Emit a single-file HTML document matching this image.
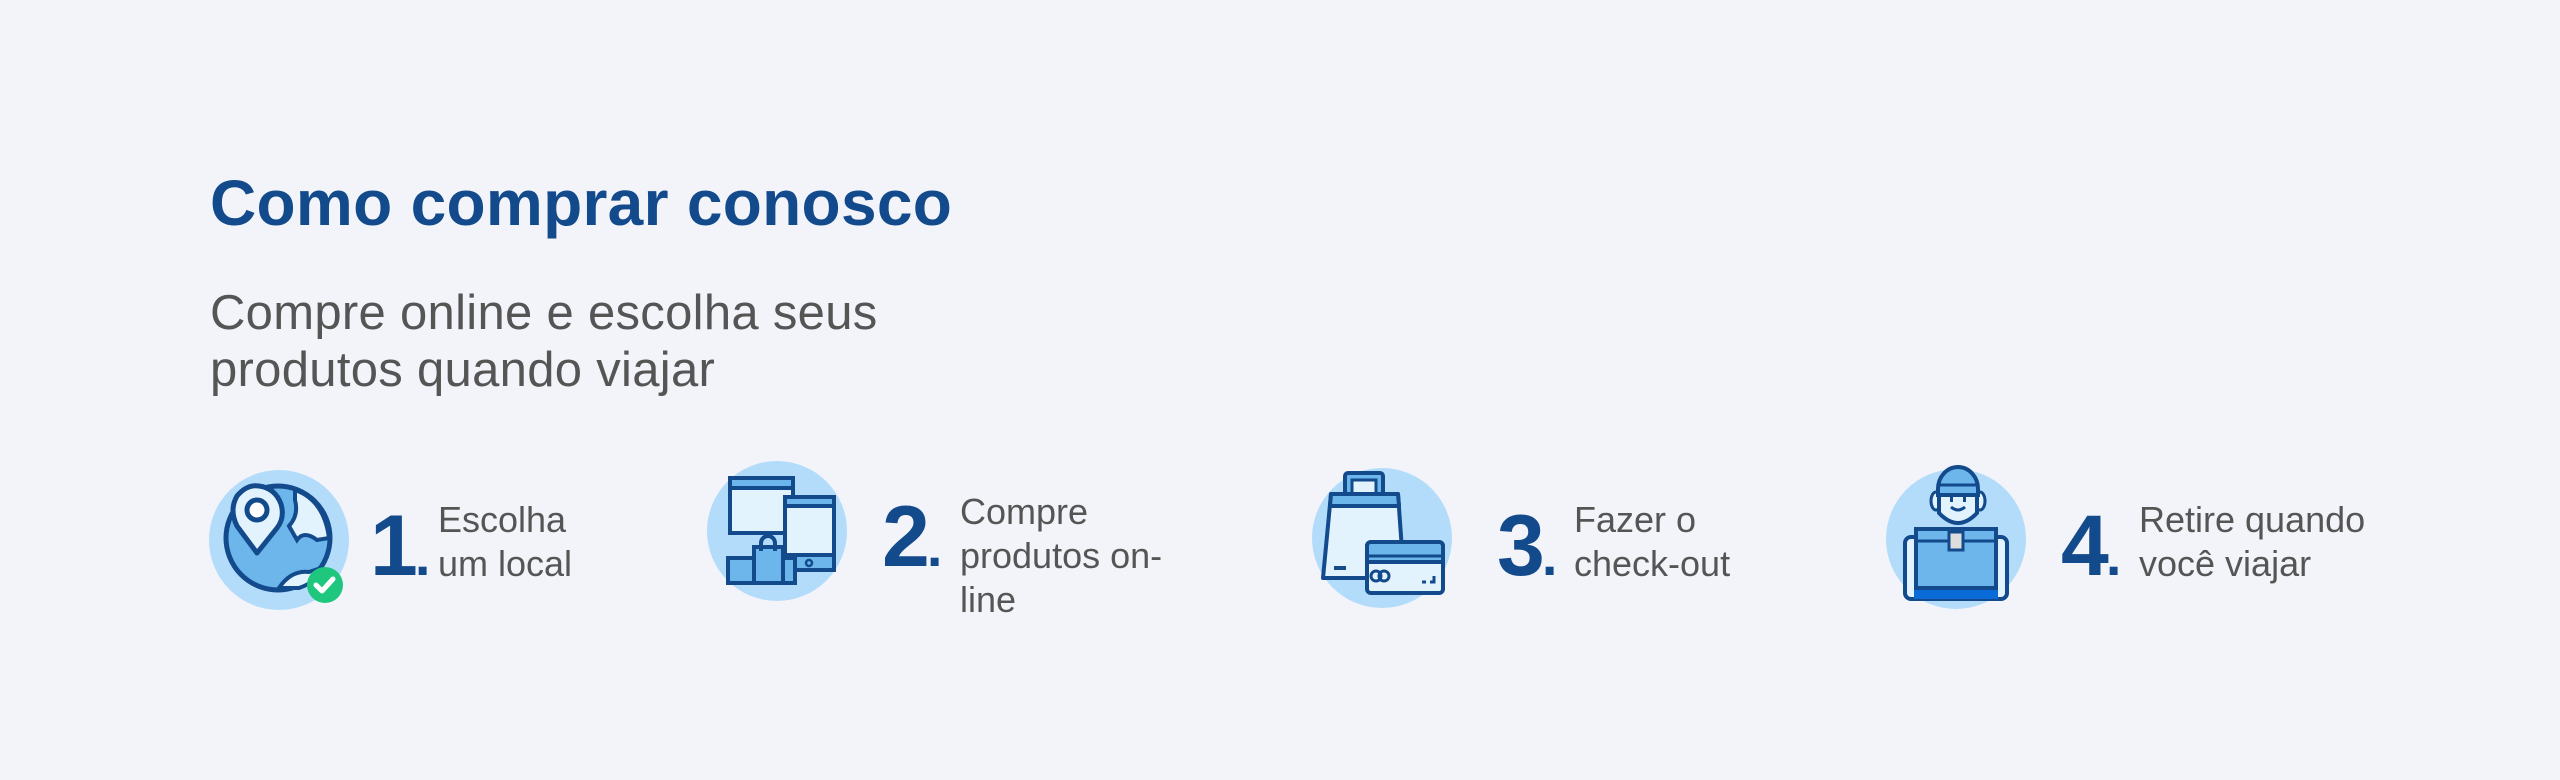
<!DOCTYPE html>
<html><head><meta charset="utf-8"><style>
body{margin:0;width:2560px;height:780px;background:#f2f4f9;position:relative;overflow:hidden;font-family:"Liberation Sans",Arial,sans-serif}
.a{position:absolute;white-space:nowrap}
h1{position:absolute;left:210px;top:166px;margin:0;font-size:64px;font-weight:700;color:#124a8c;letter-spacing:0.3px}
.sub{left:210px;top:285px;font-size:49px;line-height:57px;color:#555;white-space:normal;width:900px;letter-spacing:0.3px}
.num{font-size:86px;font-weight:700;color:#124a8c;line-height:1;letter-spacing:-3px}
.num span{font-size:56px;letter-spacing:0}
.txt{font-size:36px;line-height:44px;color:#555}
svg{position:absolute}
</style></head><body>
<h1>Como comprar conosco</h1>
<div class="a sub">Compre online e escolha seus<br>produtos quando viajar</div>

<!-- icon 1 -->
<svg style="left:199px;top:460px" width="160" height="160" viewBox="0 0 160 160">
<circle cx="80" cy="80" r="70" fill="#b3dcfb"/>
<circle cx="79" cy="78" r="52" fill="#6cb6ec" stroke="#124a8c" stroke-width="5"/>
<path d="M96 30 Q125 40 130 78 L118 80 Q105 70 98 80 L90 66 Q100 55 96 40Z" fill="#e3f3fd" stroke="#124a8c" stroke-width="4"/>
<path d="M80 128 Q92 110 110 112 L122 108 Q118 122 100 128Z" fill="#e3f3fd" stroke="#124a8c" stroke-width="4"/>
<path d="M58 93 L38 66 Q30 50 38 36 Q48 24 60 26 Q76 28 82 44 Q86 58 78 68 Z" fill="#e3f3fd" stroke="#124a8c" stroke-width="5" stroke-linejoin="round"/>
<circle cx="58" cy="50" r="10" fill="#fff" stroke="#124a8c" stroke-width="5"/>
<circle cx="126" cy="125" r="18" fill="#1fc77e"/>
<path d="M117 125 l6 6 l11 -12" fill="none" stroke="#fff" stroke-width="5" stroke-linecap="round" stroke-linejoin="round"/>
</svg>
<div class="a num" style="left:370px;top:503px">1<span>.</span></div>
<div class="a txt" style="left:438px;top:498px">Escolha<br>um local</div>

<!-- icon 2 -->
<svg style="left:697px;top:451px" width="160" height="160" viewBox="0 0 160 160">
<circle cx="80" cy="80" r="70" fill="#b3dcfb"/>
<rect x="33" y="27" width="63" height="55" fill="#e3f3fd" stroke="#124a8c" stroke-width="4"/>
<rect x="33" y="27" width="63" height="10" fill="#6cb6ec" stroke="#124a8c" stroke-width="4"/>
<rect x="88" y="46" width="49" height="73" rx="4" fill="#e3f3fd" stroke="#124a8c" stroke-width="4"/>
<rect x="88" y="46" width="49" height="9" fill="#6cb6ec" stroke="#124a8c" stroke-width="4"/>
<rect x="88" y="104" width="49" height="15" fill="#6cb6ec" stroke="#124a8c" stroke-width="4"/>
<circle cx="112" cy="112" r="3" fill="none" stroke="#124a8c" stroke-width="2.5"/>
<rect x="31" y="107" width="67" height="25" fill="#6cb6ec" stroke="#124a8c" stroke-width="4"/>
<rect x="57" y="96" width="29" height="36" fill="#6cb6ec" stroke="#124a8c" stroke-width="4"/>
<path d="M64 100 v-8 a7 7 0 0 1 14 0 v8" fill="none" stroke="#124a8c" stroke-width="4"/>
</svg>
<div class="a num" style="left:882px;top:494px">2<span>.</span></div>
<div class="a txt" style="left:960px;top:490px">Compre<br>produtos on-<br>line</div>

<!-- icon 3 -->
<svg style="left:1302px;top:458px" width="160" height="160" viewBox="0 0 160 160">
<circle cx="80" cy="80" r="70" fill="#b3dcfb"/>
<rect x="43" y="15" width="38" height="24" rx="3" fill="#6cb6ec" stroke="#124a8c" stroke-width="4"/>
<rect x="50" y="22" width="24" height="17" fill="#e3f3fd" stroke="#124a8c" stroke-width="3"/>
<path d="M29 36 L96 36 L102 120 L21 120 Z" fill="#e3f3fd" stroke="#124a8c" stroke-width="4" stroke-linejoin="round"/>
<path d="M29 36 L96 36 L97 48 L28 48 Z" fill="#6cb6ec" stroke="#124a8c" stroke-width="4" stroke-linejoin="round"/>
<rect x="32" y="108" width="12" height="4" fill="#124a8c"/>
<rect x="65" y="84" width="76" height="51" rx="4" fill="#e3f3fd" stroke="#124a8c" stroke-width="4"/>
<path d="M65 88 a4 4 0 0 1 4 -4 h68 a4 4 0 0 1 4 4 v16 h-76z" fill="#6cb6ec" stroke="#124a8c" stroke-width="4"/>
<line x1="65" y1="98" x2="141" y2="98" stroke="#124a8c" stroke-width="3"/>
<circle cx="74" cy="118" r="5" fill="none" stroke="#124a8c" stroke-width="3"/>
<circle cx="82" cy="118" r="5" fill="none" stroke="#124a8c" stroke-width="3"/>
<path d="M120 124 h4 M128 124 h4 v-6" fill="none" stroke="#124a8c" stroke-width="3"/>
</svg>
<div class="a num" style="left:1497px;top:503px">3<span>.</span></div>
<div class="a txt" style="left:1574px;top:498px">Fazer o<br>check-out</div>

<!-- icon 4 -->
<svg style="left:1876px;top:459px" width="160" height="160" viewBox="0 0 160 160">
<circle cx="80" cy="80" r="70" fill="#b3dcfb"/>
<rect x="29" y="78" width="102" height="62" rx="6" fill="#e3f3fd" stroke="#124a8c" stroke-width="4"/>
<rect x="38" y="128" width="84" height="12" fill="#0a6ad8"/>
<rect x="40" y="70" width="80" height="59" fill="#6cb6ec" stroke="#124a8c" stroke-width="4"/>
<line x1="40" y1="82" x2="120" y2="82" stroke="#124a8c" stroke-width="3"/>
<rect x="73" y="73" width="14" height="18" fill="#ddd" stroke="#124a8c" stroke-width="3"/>
<ellipse cx="60" cy="42" rx="5" ry="9" fill="#e3f3fd" stroke="#124a8c" stroke-width="3"/>
<ellipse cx="104" cy="42" rx="5" ry="9" fill="#e3f3fd" stroke="#124a8c" stroke-width="3"/>
<path d="M63 30 h38 v24 q-19 20 -38 0z" fill="#e3f3fd" stroke="#124a8c" stroke-width="4"/>
<path d="M62 30 a20 22 0 0 1 40 0 v6 h-40z" fill="#6cb6ec" stroke="#124a8c" stroke-width="4"/>
<line x1="62" y1="26" x2="102" y2="26" stroke="#124a8c" stroke-width="3"/>
<path d="M75 48 q7 6 14 0" fill="none" stroke="#124a8c" stroke-width="3"/>
<rect x="74" y="38" width="3" height="5" fill="#124a8c"/><rect x="87" y="38" width="3" height="5" fill="#124a8c"/>
</svg>
<div class="a num" style="left:2061px;top:503px">4<span>.</span></div>
<div class="a txt" style="left:2139px;top:498px">Retire quando<br>você viajar</div>
</body></html>
